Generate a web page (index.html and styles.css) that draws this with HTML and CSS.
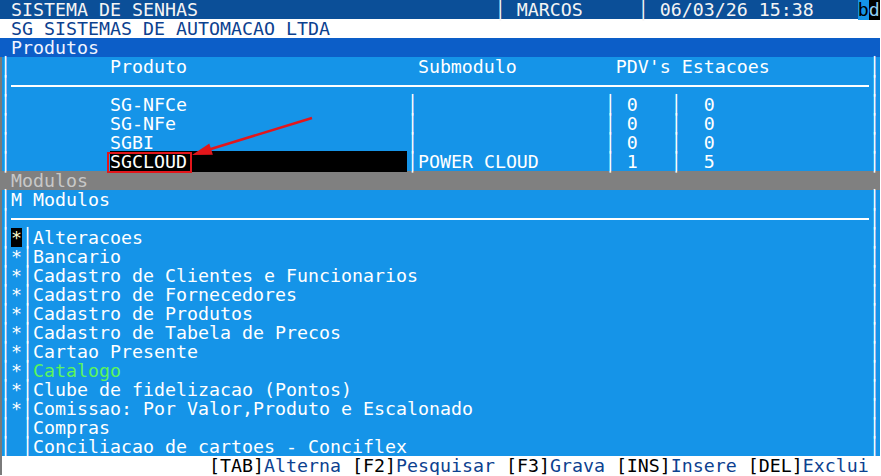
FILE: index.html
```html
<!DOCTYPE html>
<html lang="pt">
<head>
    <meta charset="UTF-8">
    <title>Sistema de Senhas</title>
    <link rel="stylesheet" href="styles.css">
</head>
<body>
    <div class="screen">
        <div class="row topbar"> SISTEMA DE SENHAS                           │ MARCOS     │ 06/03/26 15:38    <span class="tag-b">b</span><span class="tag-d">d</span></div>
        <div class="row empresa"> SG SISTEMAS DE AUTOMACAO LTDA</div>
        <div class="row titulo"> Produtos</div>

        <!-- tabela de produtos -->
        <div class="row panel"><span>│</span><span class="fill">         Produto                     Submodulo         PDV's Estacoes</span><span>│</span></div>
        <div class="row panel"><span>│</span><span class="fill rule"></span><span>│</span></div>
        <div class="row panel"><span>│</span><span class="fill">         SG-NFCe                    │                 │ 0   │  0</span><span>│</span></div>
        <div class="row panel"><span>│</span><span class="fill">         SG-NFe                     │                 │ 0   │  0</span><span>│</span></div>
        <div class="row panel"><span>│</span><span class="fill">         SGBI                       │                 │ 0   │  0</span><span>│</span></div>
        <div class="row panel"><span>│</span><span class="fill">         <span class="sel">SGCLOUD                    </span>│POWER CLOUD      │ 1   │  5</span><span>│</span></div>

        <div class="row cinza"> Modulos</div>

        <!-- lista de modulos -->
        <div class="row panel"><span>│</span><span class="fill">M Modulos</span><span>│</span></div>
        <div class="row panel"><span>│</span><span class="fill rule"></span><span>│</span></div>
        <div class="row panel"><span>│</span><span class="star atual">*</span><span>│</span><span class="fill">Alteracoes</span><span>│</span></div>
        <div class="row panel"><span>│</span><span class="star">*</span><span>│</span><span class="fill">Bancario</span><span>│</span></div>
        <div class="row panel"><span>│</span><span class="star">*</span><span>│</span><span class="fill">Cadastro de Clientes e Funcionarios</span><span>│</span></div>
        <div class="row panel"><span>│</span><span class="star">*</span><span>│</span><span class="fill">Cadastro de Fornecedores</span><span>│</span></div>
        <div class="row panel"><span>│</span><span class="star">*</span><span>│</span><span class="fill">Cadastro de Produtos</span><span>│</span></div>
        <div class="row panel"><span>│</span><span class="star">*</span><span>│</span><span class="fill">Cadastro de Tabela de Precos</span><span>│</span></div>
        <div class="row panel"><span>│</span><span class="star">*</span><span>│</span><span class="fill">Cartao Presente</span><span>│</span></div>
        <div class="row panel"><span>│</span><span class="star">*</span><span>│</span><span class="fill verde">Catalogo</span><span>│</span></div>
        <div class="row panel"><span>│</span><span class="star">*</span><span>│</span><span class="fill">Clube de fidelizacao (Pontos)</span><span>│</span></div>
        <div class="row panel"><span>│</span><span class="star">*</span><span>│</span><span class="fill">Comissao: Por Valor,Produto e Escalonado</span><span>│</span></div>
        <div class="row panel"><span>│</span><span class="star"> </span><span>│</span><span class="fill">Compras</span><span>│</span></div>
        <div class="row panel"><span>│</span><span class="star"> </span><span>│</span><span class="fill">Conciliacao de cartoes - Conciflex</span><span>│</span></div>

        <div class="row rodape">                   <span class="tecla">[TAB]</span>Alterna <span class="tecla">[F2]</span>Pesquisar <span class="tecla">[F3]</span>Grava <span class="tecla">[INS]</span>Insere <span class="tecla">[DEL]</span>Exclui</div>

        <!-- marcacao vermelha por cima da tela -->
        <svg class="marca" width="880" height="476" viewBox="0 0 880 476">
            <rect x="108" y="153" width="83" height="19" fill="none" stroke="#e3161b" stroke-width="2"/>
            <line x1="312" y1="118" x2="206" y2="150.5" stroke="#e3161b" stroke-width="2.5"/>
            <polygon points="192,155 209.3,143.4 212.9,154.8" fill="#e3161b"/>
        </svg>
    </div>
</body>
</html>
```

FILE: styles.css
```css
body {
    margin: 0;
    padding: 0;
    background-color: #fff;
}

.screen {
    position: relative;
    width: 880px;
    font-family: "DejaVu Sans Mono", monospace;
    font-size: 18.27px;
    line-height: 19px;
    color: #fff;
}

.row {
    height: 19px;
    white-space: pre;
}

.topbar {
    background-color: #0b4f98;
    color: #f4f4f4;
}

.tag-b {
    background-color: #1594e8;
    color: #000;
}

.tag-d {
    background-color: #000;
    color: #8fcdf4;
}

.empresa {
    background-color: #fff;
    color: #0c418f;
}

.titulo {
    background-color: #0c5ec8;
    color: #f0f4ff;
}

.panel {
    display: flex;
    background-color: #1594e8;
    box-shadow: inset 2px 0 0 #7a7a7a;
    color: #fff;
}

.fill {
    flex: 1;
}

.rule {
    height: 2px;
    align-self: center;
    background-color: #fff;
}

.sel {
    background-color: #000;
}

.cinza {
    background-color: #808080;
    color: #c8c8c8;
}

.star.atual {
    background-color: #000;
    color: #fffbd0;
}

.verde {
    color: #5cf55c;
}

.rodape {
    background-color: #fff;
    color: #0c418f;
    box-shadow: inset 2px 0 0 #7a7a7a;
}

.tecla {
    color: #000;
}

.marca {
    position: absolute;
    left: 0;
    top: 0;
    pointer-events: none;
}
```
